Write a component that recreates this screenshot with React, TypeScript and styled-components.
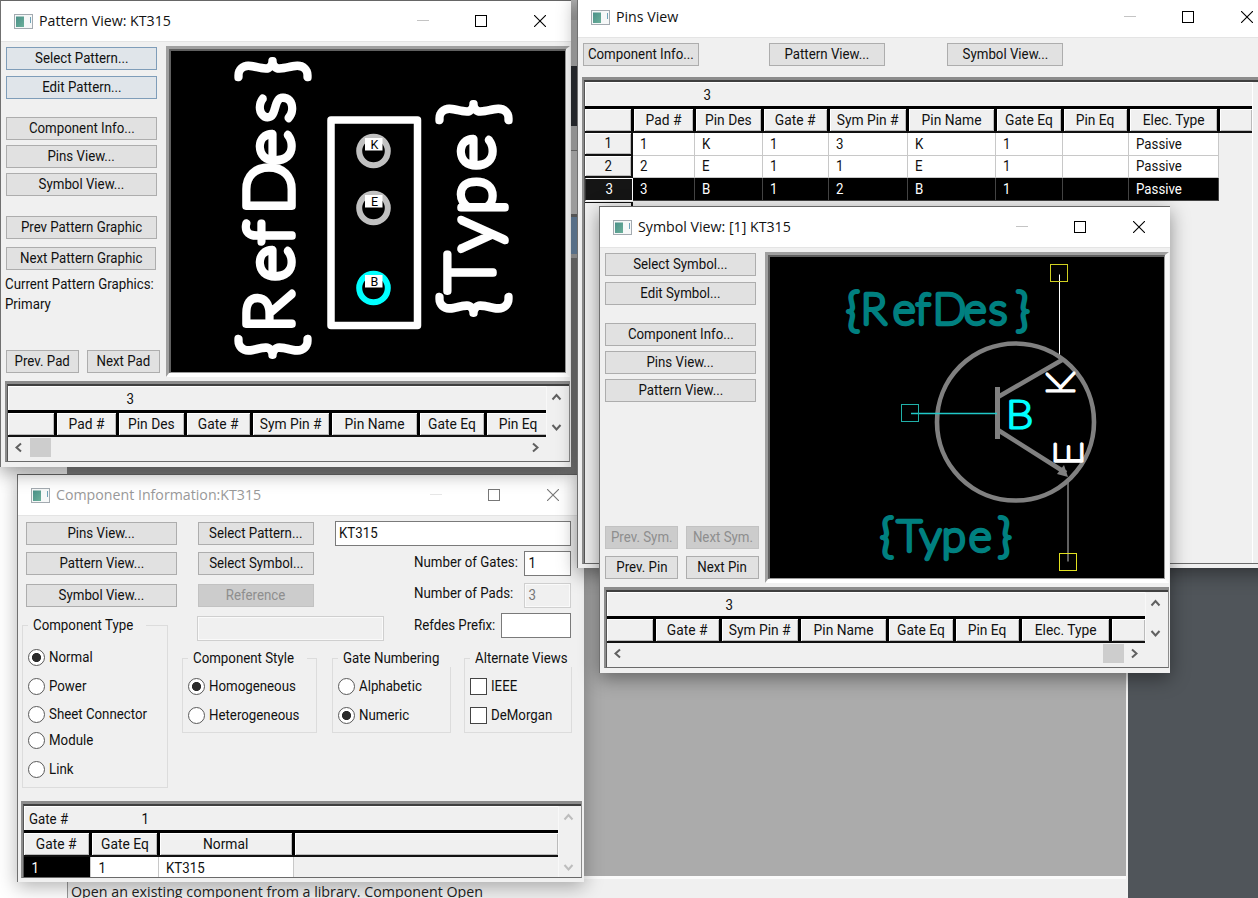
import React from "react";
import styled, { createGlobalStyle, css } from "styled-components";

const Global = createGlobalStyle`
  *, *::before, *::after { box-sizing: border-box; }
  body { margin: 0; overflow: hidden; }
`;

const uiFont = `Roboto, "Liberation Sans", sans-serif`;
const titleFont = `"Open Sans", "Noto Sans", sans-serif`;

/* ---------- desktop ---------- */

const Desktop = styled.main`
  position: relative;
  width: 1258px;
  height: 898px;
  overflow: hidden;
  background: #50555a;
  font: 15px/18px ${uiFont};
  color: #111;
`;

const AppBackdrop = styled.div`
  width: 1128px;
  height: 898px;
  display: flex;
  flex-direction: column;
  border-right: 2px solid #f2f2f2;
  background: linear-gradient(#858585 0 480px, #ababab 480px);
`;

const Workspace = styled.div`
  flex: 1;
`;

const StatusBar = styled.footer`
  height: 22px;
  border-top: 3px solid #fafafa;
  border-left: 1px solid #999;
  margin-left: 67px;
  padding-left: 3px;
  background: #f0f0f0;
  font: 14.25px/25px ${titleFont};
  white-space: nowrap;
  color: #222;
`;

const Paper = styled.div`
  position: absolute;
  left: 0;
  top: 467px;
  width: 67px;
  height: 431px;
  background: #fff;
`;

const Sliver = styled.div`
  position: absolute;
  left: 571px;
  top: 0;
  width: 7px;
  height: 474px;
  background: linear-gradient(#bdbdbd 0 20px, #cfcfcf 20px 66px, #33363b 66px 126px, #cdcdcd 126px 150px, #8a8a8a 150px 151px, #dcdcdc 151px 214px, #777 214px 217px, #7c9dc0 217px 254px, #bbb 254px 258px, #858585 258px);
`;

/* ---------- windows ---------- */

const WindowBox = styled.section<{ $x: number; $y: number; $w: number; $h: number; $inactive?: boolean }>`
  position: absolute;
  left: ${(p) => p.$x}px;
  top: ${(p) => p.$y}px;
  width: ${(p) => p.$w}px;
  height: ${(p) => p.$h}px;
  display: flex;
  flex-direction: column;
  border-top: 1px solid #666;
  border-left: 1px solid #707070;
  background: #f0f0f0;
  box-shadow: 0 5px 18px ${(p) => (p.$inactive ? "rgba(0,0,0,.3)" : "rgba(0,0,0,.42)")};
`;

const TitleBar = styled.header<{ $dim?: boolean }>`
  flex: none;
  height: 41px;
  display: flex;
  align-items: center;
  padding: 0 25px 0 13px;
  background: #fff;
  border-bottom: 1px solid #e4e4e4;
  color: ${(p) => (p.$dim ? "#999" : "#111")};
`;

const Title = styled.h1`
  flex: 1;
  margin: 0 0 0 6px;
  font: 400 14.2px/20px ${titleFont};
  white-space: nowrap;
`;

const Controls = styled.div<{ $dim?: boolean }>`
  width: 129px;
  display: flex;
  justify-content: space-between;
  color: ${(p) => (p.$dim ? "#777" : "#000")};
  svg { display: block; }
`;

const AppIcon = () => (
  <svg width="19" height="15" viewBox="0 0 19 15">
    <defs>
      <linearGradient id="teal" x1="0" y1="0" x2="1" y2="1">
        <stop offset="0" stopColor="#4a8f88" />
        <stop offset="1" stopColor="#6bb09a" />
      </linearGradient>
    </defs>
    <rect x=".5" y=".5" width="18" height="14" fill="#f6f8f8" stroke="#a3aab0" />
    <rect x="2" y="2.5" width="8" height="10.5" fill="url(#teal)" />
    <path d="M16.5 3v6" stroke="#6fa3b8" />
  </svg>
);

function TitleStrip({ title, dim }: { title: string; dim?: boolean }) {
  return (
    <TitleBar $dim={dim}>
      <AppIcon />
      <Title>{title}</Title>
      <Controls $dim={dim}>
        <svg width="12" height="12"><path d="M0 5.5h12" stroke={dim ? "#e6e6e6" : "#c4c4c4"} /></svg>
        <svg width="13" height="12"><rect x=".5" y=".5" width="11" height="11" fill="none" stroke="currentColor" /></svg>
        <svg width="12" height="12"><path d="M0 0l12 12M12 0L0 12" stroke="currentColor" strokeWidth="1.1" /></svg>
      </Controls>
    </TitleBar>
  );
}

/* ---------- controls ---------- */

const Narrow = styled.span<{ $origin?: string; $wide?: boolean }>`
  display: inline-block;
  white-space: nowrap;
  transform: scaleX(${(p) => (p.$wide ? 0.92 : 0.885)});
  transform-origin: ${(p) => p.$origin ?? "center"};
`;

const ButtonBox = styled.button<{ $w: number; $gap?: number; $hot?: boolean }>`
  flex: none;
  width: ${(p) => p.$w}px;
  height: 23px;
  margin: ${(p) => p.$gap ?? 0}px 0 0;
  padding: 0 0 1px;
  display: flex;
  align-items: center;
  justify-content: center;
  border: 1px solid #adadad;
  background: #e1e1e1;
  font: inherit;
  color: #111;
  ${(p) => p.$hot && css`border-color: #7f9db9; background: #e0e5ea;`}
  &:disabled { background: #cccccc; border-color: #c2c2c2; color: #8e8e8e; }
`;

function Button({ label, w, gap, hot, disabled }: { label: string; w: number; gap?: number; hot?: boolean; disabled?: boolean }) {
  return (
    <ButtonBox $w={w} $gap={gap} $hot={hot} disabled={disabled}>
      <Narrow>{label}</Narrow>
    </ButtonBox>
  );
}

/* ---------- tables ---------- */

const Frame = styled.div`
  border-style: solid;
  border-width: 3px 1px 1px 2px;
  border-color: #8c8c8c #8c8c8c #6a6a6a #8c8c8c;
  display: flex;
  min-height: 0;
`;

const FrameInner = styled.div`
  flex: 1;
  min-width: 0;
  display: flex;
  flex-direction: column;
  border-top: 2px solid #3f3f3f;
  border-left: 1px solid #555;
`;

const FrameMain = styled.div`
  display: flex;
  min-height: 0;
  flex: none;
`;

const TableArea = styled.div`
  flex: 1;
  min-width: 0;
  overflow: hidden;
`;

const InfoRow = styled.div`
  height: 24px;
  display: flex;
  align-items: center;
  border-top: 1px solid #fff;
  border-left: 1px solid #fff;
`;

const InfoCell = styled.span<{ $x: number }>`
  width: ${(p) => p.$x}px;
  padding-left: 4px;
`;

const HeadRow = styled.div`
  display: flex;
  height: 27px;
  border-top: 3px solid #000;
  border-bottom: 2px solid #111;
`;

const HeadCell = styled.div<{ $w?: number }>`
  ${(p) => (p.$w ? css`flex: none; width: ${p.$w}px; border-right: 3px solid #000;` : css`flex: 1;`)}
  display: flex;
  align-items: center;
  justify-content: center;
  box-shadow: inset 1px 1px #fff, inset -1px -1px #bbb;
`;

const DataRow = styled.div<{ $selected?: boolean }>`
  display: flex;
  height: 22.5px;
  ${(p) => p.$selected && css`color: #fff;`}
`;

const RowHead = styled.div<{ $w: number; $selected?: boolean }>`
  flex: none;
  width: ${(p) => p.$w}px;
  display: flex;
  align-items: center;
  justify-content: center;
  border-right: 2px solid #111;
  border-bottom: 2px solid #111;
  box-shadow: inset 1px 1px #fff, inset -1px -1px #bbb;
  ${(p) => p.$selected && css`
    background: #151515;
    border: 1px solid #fff;
    border-left-color: #333;
    box-shadow: none;
  `}
`;

const DataCell = styled.div<{ $w: number; $selected?: boolean }>`
  flex: none;
  width: ${(p) => p.$w}px;
  display: flex;
  align-items: center;
  padding-left: 7px;
  background: ${(p) => (p.$selected ? "#000" : "#fff")};
  border-right: 1px solid ${(p) => (p.$selected ? "#444" : "#c8c8c8")};
  border-bottom: 1px solid ${(p) => (p.$selected ? "#444" : "#c8c8c8")};
`;

const VScroll = styled.div<{ $dim?: boolean }>`
  flex: none;
  width: 23px;
  display: flex;
  flex-direction: column;
  align-items: center;
  justify-content: space-between;
  padding: 6px 3px 4px 0;
  color: ${(p) => (p.$dim ? "#bdbdbd" : "#606060")};
  border-left: 1px solid #f8f8f8;
  svg { display: block; }
`;

const HScroll = styled.div<{ $thumbRight?: boolean }>`
  height: 21px;
  width: 538px;
  display: flex;
  align-items: center;
  padding: 0 5px;
  gap: 6px;
  color: #606060;
  i {
    width: 21px;
    height: 19px;
    background: #cdcdcd;
    ${(p) => p.$thumbRight && css`margin: 0 -1px 0 auto;`}
  }
  svg { display: block; }
  svg:last-child { ${(p) => !p.$thumbRight && css`margin-left: auto;`} }
`;

const arrows = {
  up: "M1.5 7.5L5.5 3l4 4.5",
  down: "M1.5 3l4 4.5 4-4.5",
  left: "M8 1.5L3.5 5.5 8 9.5",
  right: "M3 1.5l4.5 4-4.5 4",
};
const Arrow = ({ dir }: { dir: keyof typeof arrows }) => (
  <svg width="11" height="11"><path d={arrows[dir]} fill="none" stroke="currentColor" strokeWidth="2" /></svg>
);

type Col = [string, number];
const cols: Record<string, Col> = {
  blank: ["", 49],
  pad: ["Pad #", 62],
  des: ["Pin Des", 68],
  gate: ["Gate #", 66],
  sym: ["Sym Pin #", 79],
  name: ["Pin Name", 88],
  gateEq: ["Gate Eq", 67],
  pinEq: ["Pin Eq", 66],
  elec: ["Elec. Type", 90],
};

function Heads({ list }: { list: Col[] }) {
  return (
    <HeadRow>
      {list.map(([label, w], i) => (
        <HeadCell key={i} $w={w}><Narrow $wide>{label}</Narrow></HeadCell>
      ))}
      <HeadCell />
    </HeadRow>
  );
}

const DockedFrame = styled(Frame)`
  width: 565px;
  height: 81px;
  margin: 4px 0 0 4px;
`;

function ScrollTable({ list, thumbRight }: { list: Col[]; thumbRight?: boolean }) {
  return (
    <DockedFrame>
      <FrameInner>
        <FrameMain>
          <TableArea>
            <InfoRow><InfoCell $x={117} /><Narrow>3</Narrow></InfoRow>
            <Heads list={list} />
          </TableArea>
          <VScroll><Arrow dir="up" /><Arrow dir="down" /></VScroll>
        </FrameMain>
        <HScroll $thumbRight={thumbRight}>
          <Arrow dir="left" /><i /><Arrow dir="right" />
        </HScroll>
      </FrameInner>
    </DockedFrame>
  );
}

/* ---------- vector drawings ---------- */

interface PlotProps {
  text: string;
  xs: number[];
  size: number;
  braceSize: number;
  braceDrop: number;
  weight: number;
  color: string;
  place: string;
}

const STRETCH = 1.03;

function PlotText({ text, xs, size, braceSize, braceDrop, weight, color, place }: PlotProps) {
  const at = xs.map((x) => (x / STRETCH).toFixed(2));
  const last = xs.length - 1;
  return (
    <text transform={`${place} scale(${STRETCH} 1)`} fill={color} stroke={color} strokeWidth={weight} strokeLinejoin="round"
      fontFamily="Lato" fontWeight={100} fontSize={size}>
      <tspan x={at[0]} y={braceDrop} fontSize={braceSize}>{text[0]}</tspan>
      <tspan x={at.slice(1, last).join(" ")} y={0}>{text.slice(1, last)}</tspan>
      <tspan x={at[last]} y={braceDrop} fontSize={braceSize}>{text[last]}</tspan>
    </text>
  );
}

const CanvasFrame = styled.div`
  flex: none;
  width: 404px;
  height: 331px;
  border-style: solid;
  border-width: 3px 4px 4px 3px;
  border-color: #a0a0a0 #f8f8f8 #fff #a0a0a0;
  svg {
    display: block;
    width: 397px;
    height: 324px;
    border-style: solid;
    border-width: 2px 1px 1px 2px;
    border-color: #606060 #999 #999 #606060;
    background: #000;
  }
`;

function Pad({ y, label, color }: { y: number; label: string; color: string }) {
  return (
    <g>
      <circle cx="373.5" cy={y} r="14.3" fill="#000" stroke={color} strokeWidth="6" />
      <rect x="365" y={y - 13} width="17.5" height="12.5" fill="#fff" />
      <text x="374.5" y={y - 2} fontFamily="Roboto" fontSize="12.5" textAnchor="middle" fill="#000">{label}</text>
    </g>
  );
}

function PatternDrawing() {
  return (
    <svg viewBox="171 51 394 321">
      <PlotText text="{RefDes}" xs={[0, 27, 78, 115, 145, 194, 237, 278]} size={66} braceSize={80} braceDrop={6} weight={7.5}
        color="#fff" place="translate(292 359) rotate(-90)" />
      <PlotText text="{Type}" xs={[0, 25, 66, 103, 147, 193]} size={66} braceSize={80} braceDrop={6} weight={7.5}
        color="#fff" place="translate(493 317) rotate(-90)" />
      <rect x="331" y="120" width="86.5" height="205.5" fill="none" stroke="#fff" strokeWidth="7.5" strokeLinejoin="round" />
      <Pad y={151} label="K" color="#c0c0c0" />
      <Pad y={208} label="E" color="#c0c0c0" />
      <Pad y={288} label="B" color="#00ffff" />
    </svg>
  );
}

function SymbolDrawing() {
  const teal = "#008080";
  return (
    <svg viewBox="770 257 394 321">
      <PlotText text="{RefDes}" xs={[846, 861, 893, 916, 933, 964, 989, 1016]} size={42} braceSize={46} braceDrop={1.5} weight={4.5}
        color={teal} place="translate(0 324)" />
      <PlotText text="{Type}" xs={[880, 897, 920, 942, 969, 998]} size={42} braceSize={46} braceDrop={1.5} weight={4.5}
        color={teal} place="translate(0 550.5)" />
      <path d="M1059.5 274.5V358" stroke="#fff" />
      <path d="M1068 482V561.5" stroke="#c0c0c0" />
      <g fill="none" stroke="#808080" strokeWidth="4.6">
        <circle cx="1015.5" cy="422" r="78.5" />
        <path d="M997.5 387v52" strokeWidth="5" />
        <path d="M998 397l64-37M998 430l68 43" />
      </g>
      <path d="M1068 477l-11-3 7-9z" fill="#808080" />
      <path d="M911 413.5h86" stroke="#20c8c8" strokeWidth="1.3" />
      <rect x="901.5" y="404.5" width="17" height="17" fill="none" stroke="#20b0a8" />
      <rect x="1050.5" y="264.5" width="17" height="17" fill="none" stroke="#d0d020" />
      <rect x="1059.5" y="553.5" width="17" height="17" fill="none" stroke="#e0e020" />
      <g fontFamily="Lato" fontWeight={100} fontSize="38" strokeWidth="3" strokeLinejoin="round">
        <text transform="translate(1006 427.5) scale(1.15 1)" fill="#0ff" stroke="#0ff">B</text>
        <text transform="translate(1073.5 395.5) rotate(-90)" fill="#fff" stroke="#fff">K</text>
        <text transform="translate(1082 466) rotate(-90) scale(1.1 1)" fill="#fff" stroke="#fff">E</text>
      </g>
    </svg>
  );
}

/* ---------- pattern and symbol windows ---------- */

const ViewBody = styled.div`
  display: flex;
  height: 335px;
`;

const SidePanel = styled.div`
  width: 165px;
  padding: 5px 0 0 5px;
`;

const CanvasSlot = styled.div`
  padding-top: 4px;
`;

const ButtonPair = styled.div<{ $gap: number }>`
  display: flex;
  gap: 8px;
  margin-top: ${(p) => p.$gap}px;
`;

const Note = styled.p`
  margin: 4px 0 0 -1px;
  height: 40px;
  line-height: 20px;
  white-space: nowrap;
`;

function PatternWindow() {
  return (
    <WindowBox $x={0} $y={0} $w={571} $h={467}>
      <TitleStrip title="Pattern View: KT315" />
      <ViewBody>
        <SidePanel>
          <Button w={151} label="Select Pattern..." hot />
          <Button w={151} gap={6} label="Edit Pattern..." hot />
          <Button w={151} gap={18} label="Component Info..." />
          <Button w={151} gap={5} label="Pins View..." />
          <Button w={151} gap={5} label="Symbol View..." />
          <Button w={151} gap={20} label="Prev Pattern Graphic" />
          <Button w={150} gap={8} label="Next Pattern Graphic" />
          <Note>
            <Narrow $origin="left">Current Pattern Graphics:</Narrow><br />
            <Narrow $origin="left">Primary</Narrow>
          </Note>
          <ButtonPair $gap={36}>
            <Button w={73} label="Prev. Pad" />
            <Button w={73} label="Next Pad" />
          </ButtonPair>
        </SidePanel>
        <CanvasSlot><CanvasFrame><PatternDrawing /></CanvasFrame></CanvasSlot>
      </ViewBody>
      <ScrollTable list={[cols.blank, cols.pad, cols.des, cols.gate, cols.sym, cols.name, cols.gateEq, cols.pinEq]} />
    </WindowBox>
  );
}

function SymbolWindow() {
  return (
    <WindowBox $x={599} $y={206} $w={571} $h={467}>
      <TitleStrip title="Symbol View: [1] KT315" />
      <ViewBody>
        <SidePanel>
          <Button w={151} label="Select Symbol..." />
          <Button w={151} gap={6} label="Edit Symbol..." />
          <Button w={151} gap={18} label="Component Info..." />
          <Button w={151} gap={5} label="Pins View..." />
          <Button w={151} gap={5} label="Pattern View..." />
          <ButtonPair $gap={124}>
            <Button w={73} label="Prev. Sym." disabled />
            <Button w={73} label="Next Sym." disabled />
          </ButtonPair>
          <ButtonPair $gap={7}>
            <Button w={73} label="Prev. Pin" />
            <Button w={73} label="Next Pin" />
          </ButtonPair>
        </SidePanel>
        <CanvasSlot><CanvasFrame><SymbolDrawing /></CanvasFrame></CanvasSlot>
      </ViewBody>
      <ScrollTable thumbRight list={[cols.blank, cols.gate, cols.sym, cols.name, cols.gateEq, cols.pinEq, cols.elec]} />
    </WindowBox>
  );
}

/* ---------- pins window ---------- */

const PinsToolbar = styled.div`
  display: flex;
  height: 39px;
  padding: 5px 0 0 5px;
  > :nth-child(2) { margin-left: 70px; }
  > :nth-child(3) { margin-left: 62px; }
`;

const PinsFrame = styled(Frame)`
  flex: 1;
  margin: 0 0 4px 4px;
`;

const PinsArea = styled.div`
  width: 668px;
  flex: 1;
  display: flex;
  flex-direction: column;
  border-right: 1px solid #fff;
`;

const RowHeadTail = styled.div`
  flex: 1;
  width: 48px;
  margin-top: 1px;
  border-top: 1px solid #111;
  border-right: 2px solid #111;
`;

const pinCols = [cols.pad, cols.des, cols.gate, cols.sym, cols.name, cols.gateEq, cols.pinEq, cols.elec];
const pins = [
  ["1", "K", "1", "3", "K", "1", "", "Passive"],
  ["2", "E", "1", "1", "E", "1", "", "Passive"],
  ["3", "B", "1", "2", "B", "1", "", "Passive"],
];

function PinsWindow() {
  return (
    <WindowBox $x={577} $y={-4} $w={701} $h={572}>
      <TitleStrip title="Pins View" />
      <PinsToolbar>
        <Button w={116} label="Component Info..." />
        <Button w={116} label="Pattern View..." />
        <Button w={116} label="Symbol View..." />
      </PinsToolbar>
      <PinsFrame>
        <FrameInner>
          <PinsArea>
            <InfoRow><InfoCell $x={117} /><Narrow>3</Narrow></InfoRow>
            <Heads list={[cols.blank, ...pinCols]} />
            {pins.map((pin, r) => {
              const selected = r === 2;
              return (
                <DataRow key={r} $selected={selected}>
                  <RowHead $w={48} $selected={selected}><Narrow>{r + 1}</Narrow></RowHead>
                  {pin.map((v, c) => (
                    <DataCell key={c} $w={pinCols[c][1]} $selected={selected}><Narrow $origin="left">{v}</Narrow></DataCell>
                  ))}
                </DataRow>
              );
            })}
            <RowHeadTail />
          </PinsArea>
        </FrameInner>
      </PinsFrame>
    </WindowBox>
  );
}

/* ---------- component information window ---------- */

const InfoBody = styled.div`
  display: flex;
  height: 285px;
  padding: 0 0 0 4px;
`;

const TypeColumn = styled.div`
  width: 160px;
  padding-top: 6px;
  > button { margin-left: 4px; }
`;

const Details = styled.div`
  flex: 1;
`;

const Form = styled.div`
  display: grid;
  grid-template-columns: 138px 49px 187px;
  grid-template-rows: 30px 32px 30px 30px;
  margin: 5px 0 0 15px;
`;

const FormCell = styled.div<{ $from: number; $to: number; $top?: number; $between?: boolean }>`
  grid-column: ${(p) => p.$from} / ${(p) => p.$to};
  display: flex;
  justify-content: ${(p) => (p.$between ? "space-between" : "flex-start")};
  align-items: flex-start;
  padding: ${(p) => p.$top ?? 0}px 0 0 ${(p) => (p.$between ? 30 : 0)}px;
  > button { margin-left: 1px; }
`;

const FieldLabel = styled.label<{ $drop?: number }>`
  width: 60px;
  padding-top: ${(p) => p.$drop ?? 2}px;
`;

const Field = styled.div<{ $w: number; $off?: boolean }>`
  flex: none;
  width: ${(p) => p.$w}px;
  height: 25px;
  padding-left: 3px;
  line-height: 23px;
  border: 1px solid ${(p) => (p.$off ? "#cfcfcf" : "#7a7a7a")};
  background: ${(p) => (p.$off ? "#f0f0f0" : "#fff")};
  color: ${(p) => (p.$off ? "#777" : "#111")};
  ${(p) => p.$off && css`box-shadow: inset 0 0 0 1px #fafafa;`}
`;

const Group = styled.fieldset<{ $w: number; $h: number }>`
  flex: none;
  width: ${(p) => p.$w}px;
  height: ${(p) => p.$h}px;
  margin: 0;
  padding: 0 0 0 5px;
  border: 1px solid #dcdcdc;
  min-width: 0;
  legend {
    height: 18px;
    margin-left: 0;
    padding: 0 0 0 5px;
  }
`;

const TypeGroup = styled(Group)`
  margin-top: 9px;
`;

const Groups = styled.div`
  display: flex;
  margin: 6px 0 0;
  > :nth-child(2) { margin-left: 15px; }
  > :nth-child(3) { margin-left: 13px; }
`;

const OptionRow = styled.label<{ $gap: number }>`
  display: flex;
  align-items: center;
  gap: 4px;
  height: 18px;
  margin-top: ${(p) => p.$gap}px;
`;

const Radio = styled.span<{ $on?: boolean }>`
  flex: none;
  width: 17px;
  height: 17px;
  border-radius: 50%;
  border: 1.5px solid #5a5a5a;
  background: ${(p) => (p.$on ? "radial-gradient(circle, #2b2b2b 0 4.2px, #fff 4.9px)" : "#fff")};
`;

const Check = styled.span`
  flex: none;
  width: 17px;
  height: 17px;
  border: 1.5px solid #444;
  background: #fff;
`;

function Option({ label, on, gap, box }: { label: string; on?: boolean; gap: number; box?: boolean }) {
  return (
    <OptionRow $gap={gap}>
      {box ? <Check /> : <Radio $on={on} />}
      <Narrow $origin="left">{label}</Narrow>
    </OptionRow>
  );
}

const GateFrame = styled(Frame)`
  width: 561px;
  height: 77px;
  margin-left: 3px;
`;

const GateMain = styled(FrameMain)`
  height: 71px;
`;

const BlackCell = styled(DataCell)`
  background: #000;
  color: #fff;
`;

function InfoWindow() {
  return (
    <WindowBox $x={17} $y={474} $w={567} $h={408} $inactive>
      <TitleStrip title="Component Information:KT315" dim />
      <InfoBody>
        <TypeColumn>
          <Button w={151} label="Pins View..." />
          <Button w={151} gap={7} label="Pattern View..." />
          <Button w={151} gap={9} label="Symbol View..." />
          <TypeGroup $w={146} $h={172}>
            <legend><Narrow $origin="left">Component Type</Narrow></legend>
            <Option gap={14} label="Normal" on />
            <Option gap={11} label="Power" />
            <Option gap={10} label="Sheet Connector" />
            <Option gap={8} label="Module" />
            <Option gap={11} label="Link" />
          </TypeGroup>
        </TypeColumn>
        <Details>
          <Form>
            <FormCell $from={1} $to={2} $top={1}><Button w={116} label="Select Pattern..." /></FormCell>
            <FormCell $from={2} $to={4}><Field $w={236}><Narrow $origin="left">KT315</Narrow></Field></FormCell>
            <FormCell $from={1} $to={2} $top={1}><Button w={116} label="Select Symbol..." /></FormCell>
            <FormCell $from={3} $to={4} $between>
              <FieldLabel><Narrow $origin="left">Number of Gates:</Narrow></FieldLabel>
              <Field $w={47}><Narrow>1</Narrow></Field>
            </FormCell>
            <FormCell $from={1} $to={2} $top={1}><Button w={116} label="Reference" disabled /></FormCell>
            <FormCell $from={3} $to={4} $between>
              <FieldLabel $drop={1}><Narrow $origin="left">Number of Pads:</Narrow></FieldLabel>
              <Field $w={47} $off><Narrow>3</Narrow></Field>
            </FormCell>
            <FormCell $from={1} $to={3} $top={3}><Field $w={187} $off /></FormCell>
            <FormCell $from={3} $to={4} $between>
              <FieldLabel $drop={3}><Narrow $origin="left">Refdes Prefix:</Narrow></FieldLabel>
              <Field $w={70} />
            </FormCell>
          </Form>
          <Groups>
            <Group $w={135} $h={84}>
              <legend><Narrow $origin="left">Component Style</Narrow></legend>
              <Option gap={10} label="Homogeneous" on />
              <Option gap={11} label="Heterogeneous" />
            </Group>
            <Group $w={119} $h={84}>
              <legend><Narrow $origin="left">Gate Numbering</Narrow></legend>
              <Option gap={10} label="Alphabetic" />
              <Option gap={11} label="Numeric" on />
            </Group>
            <Group $w={108} $h={84}>
              <legend><Narrow $origin="left">Alternate Views</Narrow></legend>
              <Option gap={10} label="IEEE" box />
              <Option gap={11} label="DeMorgan" box />
            </Group>
          </Groups>
        </Details>
      </InfoBody>
      <GateFrame>
        <FrameInner>
          <GateMain>
            <TableArea>
              <InfoRow><InfoCell $x={116}><Narrow $origin="left">Gate #</Narrow></InfoCell><Narrow>1</Narrow></InfoRow>
              <Heads list={[["Gate #", 68], ["Gate Eq", 68], ["Normal", 135]]} />
              <DataRow>
                <BlackCell $w={67}><Narrow>1</Narrow></BlackCell>
                <DataCell $w={68}><Narrow>1</Narrow></DataCell>
                <DataCell $w={135}><Narrow $origin="left">KT315</Narrow></DataCell>
              </DataRow>
            </TableArea>
            <VScroll $dim><Arrow dir="up" /><Arrow dir="down" /></VScroll>
          </GateMain>
        </FrameInner>
      </GateFrame>
    </WindowBox>
  );
}

export default function App() {
  return (
    <Desktop>
      <Global />
      <AppBackdrop>
        <Workspace />
        <StatusBar>Open an existing component from a library. Component Open</StatusBar>
      </AppBackdrop>
      <Paper />
      <Sliver />
      <InfoWindow />
      <PatternWindow />
      <PinsWindow />
      <SymbolWindow />
    </Desktop>
  );
}
